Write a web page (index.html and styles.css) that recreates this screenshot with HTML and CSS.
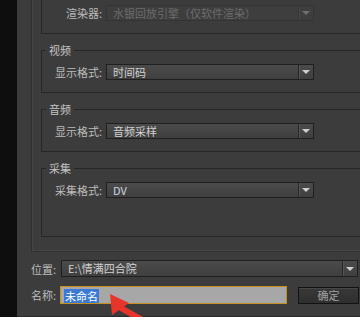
FILE: index.html
```html
<!DOCTYPE html>
<html lang="zh-CN">
<head>
    <meta charset="UTF-8">
    <meta name="viewport" content="width=device-width, initial-scale=1.0">
    <title>新建项目</title>
    <link rel="stylesheet" href="styles.css">
</head>
<body>

    <div class="screen">
        <div class="strip"></div>

        <div class="dialog">
            <div class="panel">
                <fieldset class="group group-top">
                    <div class="field">
                        <span class="label">渲染器:</span>
                        <div class="select disabled">
                            <span class="value">水银回放引擎（仅软件渲染）</span>
                            <span class="caret-box"><span class="caret"></span></span>
                        </div>
                    </div>
                </fieldset>

                <fieldset class="group">
                    <legend>视频</legend>
                    <div class="field">
                        <span class="label">显示格式:</span>
                        <div class="select">
                            <span class="value">时间码</span>
                            <span class="caret-box"><span class="caret"></span></span>
                        </div>
                    </div>
                </fieldset>

                <fieldset class="group">
                    <legend>音频</legend>
                    <div class="field">
                        <span class="label">显示格式:</span>
                        <div class="select">
                            <span class="value">音频采样</span>
                            <span class="caret-box"><span class="caret"></span></span>
                        </div>
                    </div>
                </fieldset>

                <fieldset class="group group-last">
                    <legend>采集</legend>
                    <div class="field">
                        <span class="label">采集格式:</span>
                        <div class="select">
                            <span class="value value-dv">DV</span>
                            <span class="caret-box"><span class="caret"></span></span>
                        </div>
                    </div>
                </fieldset>
            </div>

            <div class="row row-location">
                <span class="row-label">位置:</span>
                <div class="select select-wide">
                    <span class="value">E:\情满四合院</span>
                    <span class="caret-box"><span class="caret"></span></span>
                </div>
            </div>

            <div class="row row-name">
                <span class="row-label">名称:</span>
                <div class="name-input"><span class="selected">未命名</span></div>
                <button class="ok">确定</button>
            </div>
        </div>

        <!-- annotation arrow drawn over the dialog -->
        <svg class="pointer" viewBox="100 288 50 29" width="50" height="29">
            <line x1="119" y1="307" x2="146" y2="322" stroke="#e8352b" stroke-width="6"/>
            <polygon points="110,294 112,315 129,303" fill="#e8352b"/>
        </svg>
    </div>

</body>
</html>
```

FILE: styles.css
```css
body {
    margin: 0;
    font-family: 'Noto Sans CJK SC', 'Noto Sans', sans-serif;
    font-size: 11px;
    background-color: #0f0f0f;
}

.screen {
    position: relative;
    display: flex;
    width: 360px;
    height: 317px;
    overflow: hidden;
}

.strip {
    width: 17px;
    flex-shrink: 0;
    background-color: #0e0e0e;
}

.dialog {
    flex: 1;
    min-width: 0;
    padding: 0 1px 0 14px;
    background-color: #3c3c3c;
    border-bottom: 1px solid #2a2a2a;
    overflow: hidden;
}

.panel {
    margin-top: -30px;
    margin-right: -40px;
    padding: 10px 0 14px 9px;
    border-left: 1px solid #303030;
    border-bottom: 1px solid #303030;
    box-shadow: inset 1px -1px 0 #464646;
}

.group {
    min-width: 0;
    margin: 9px 0 0;
    padding: 7px 0 12px 12px;
    border: 1px solid #272727;
}

.group-top {
    margin-top: 0;
    padding-top: 24px;
}

.group-last {
    padding-bottom: 38px;
}

.group legend {
    margin-left: -8px;
    padding: 0 3px;
    line-height: 14px;
    color: #c4c4c4;
}

.field {
    display: flex;
    align-items: center;
    gap: 4px;
}

.label {
    width: 48px;
    text-align: right;
    color: #bdbdbd;
    line-height: 14px;
}

.select {
    display: flex;
    box-sizing: border-box;
    width: 208px;
    height: 16px;
    border: 1px solid #1f1f1f;
    background: linear-gradient(#4b4b4b, #3f3f3f);
    color: #d2d2d2;
}

.select .value {
    flex: 1;
    padding-left: 6px;
    line-height: 14px;
    white-space: nowrap;
    overflow: hidden;
}

.value-dv {
    color: #cdd4e2;
}

.caret-box {
    display: flex;
    align-items: center;
    justify-content: center;
    width: 14px;
    border-left: 1px solid #262626;
    box-shadow: inset 1px 0 0 #555;
}

.caret {
    width: 0;
    height: 0;
    border-left: 4px solid transparent;
    border-right: 4px solid transparent;
    border-top: 4px solid #cfcfcf;
}

.select.disabled {
    border-color: #343434;
    background: #3e3e3e;
    color: #6c6c6c;
}

.select.disabled .caret-box {
    border-left-color: #353535;
    box-shadow: inset 1px 0 0 #474747;
}

.select.disabled .caret {
    border-top-color: #707070;
}

.row {
    display: flex;
    align-items: center;
}

.row-label {
    width: 26px;
    color: #bdbdbd;
    line-height: 14px;
}

.row-location {
    margin-top: 8px;
    gap: 4px;
}

.select-wide {
    flex: 1;
    width: auto;
    height: 17px;
    margin-right: 1px;
}

.select-wide .value {
    line-height: 15px;
}

.row-name {
    margin-top: 9px;
    gap: 3px;
}

.name-input {
    flex: 1;
    box-sizing: border-box;
    height: 18px;
    padding: 1px 0 0 3px;
    border: 1px solid #c4901e;
    background-color: #a7a7a7;
}

.selected {
    display: inline-block;
    padding: 0 1px;
    line-height: 14px;
    background-color: #3a7ad6;
    color: #fff;
}

.ok {
    box-sizing: border-box;
    width: 61px;
    height: 17px;
    margin-left: 8px;
    padding: 0;
    font-family: inherit;
    font-size: 11px;
    line-height: 14px;
    color: #a2a2a2;
    background: linear-gradient(#383838, #2f2f2f);
    border: 1px solid #121212;
    box-shadow: inset 0 1px 0 #474747;
}

.pointer {
    position: absolute;
    left: 100px;
    top: 288px;
}
```
